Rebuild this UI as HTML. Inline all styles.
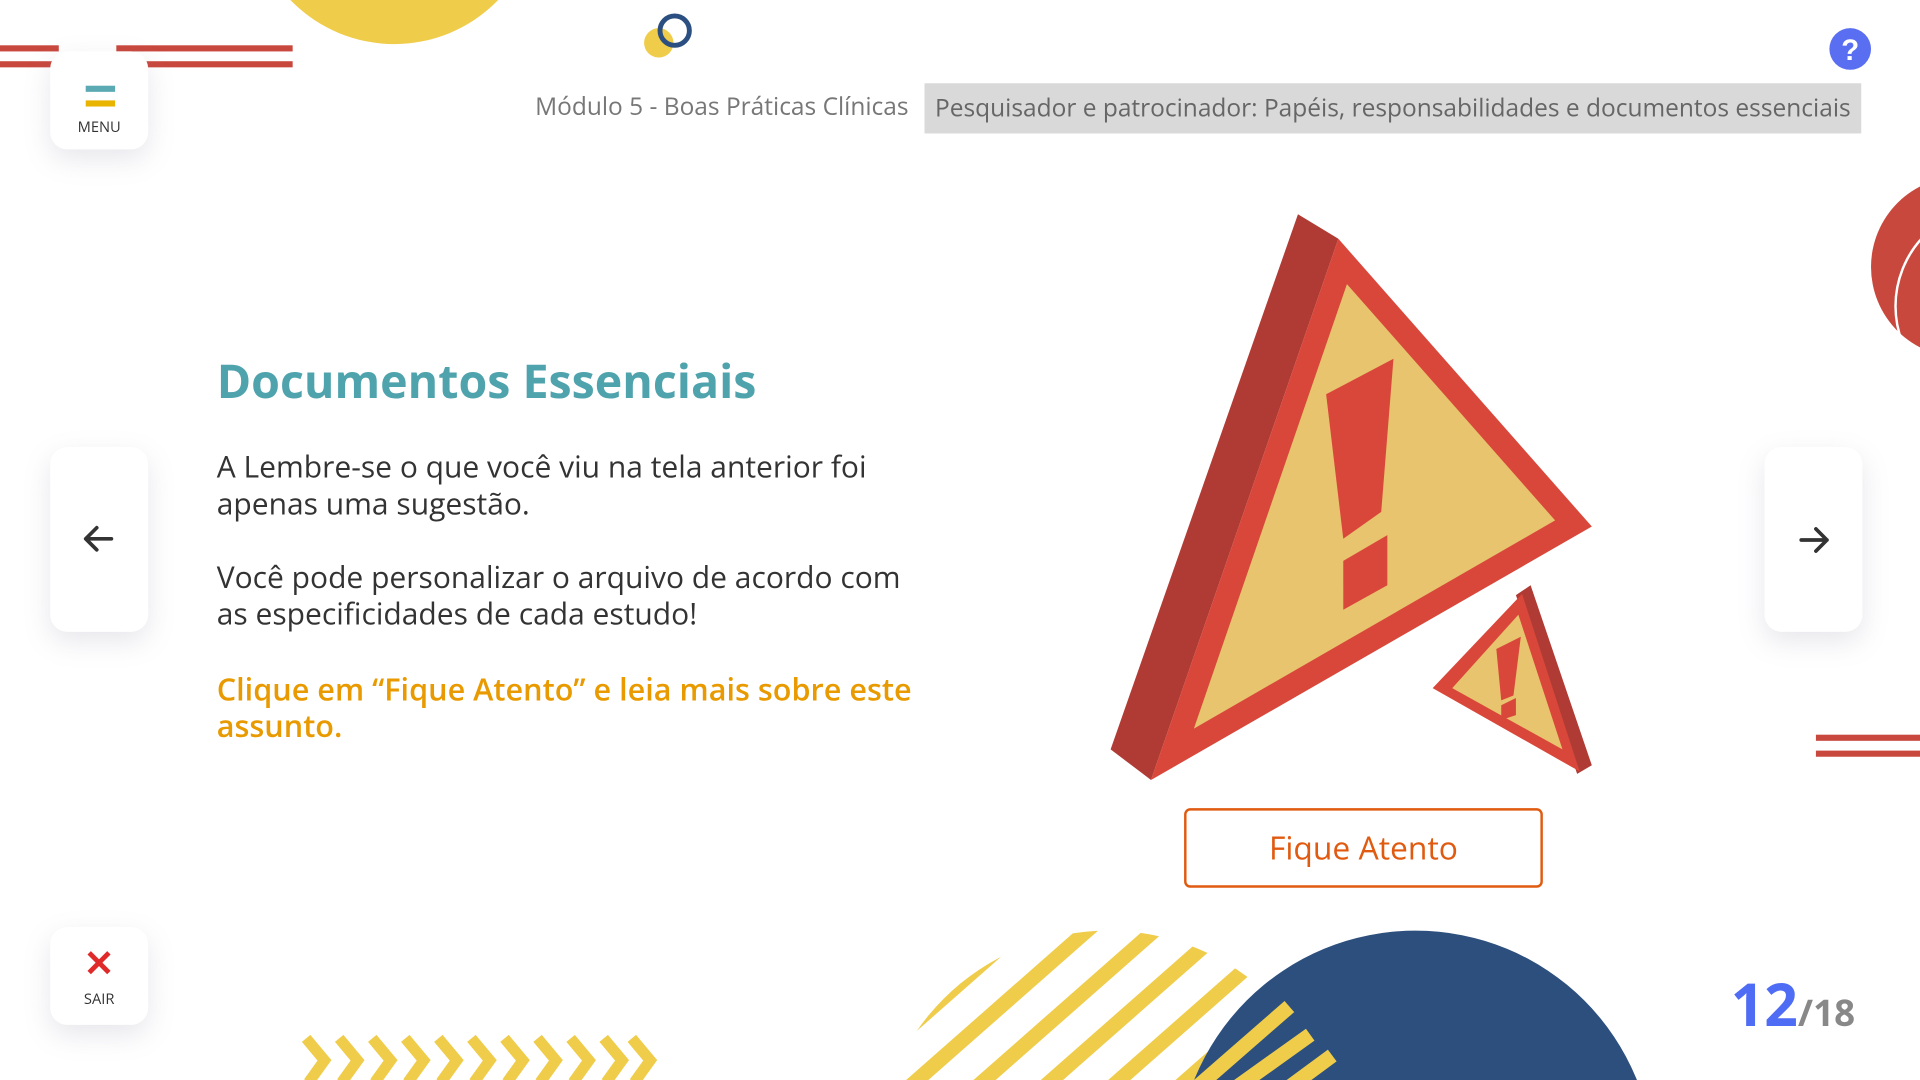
<!DOCTYPE html>
<html><head><meta charset="utf-8"><style>
html,body{margin:0;padding:0;width:1920px;height:1080px;overflow:hidden;background:#fff;}
#w{position:absolute;left:0;top:0;width:1568px;height:882px;transform:scale(1.22449);transform-origin:0 0;font-family:"Open Sans","Liberation Sans",sans-serif;overflow:hidden;}
.card{position:absolute;background:#fff;border-radius:14px;box-shadow:0 8px 22px rgba(120,120,150,0.18);}
.abs{position:absolute;}
</style></head><body><div id="w">
<svg class="abs" style="left:0;top:0" width="1568" height="882">
<circle cx="322" cy="-82" r="118" fill="#efcc4a"/>
<rect x="0" y="37" width="48" height="5" fill="#c9483d"/>
<rect x="95" y="37" width="144" height="5" fill="#c9483d"/>
<rect x="0" y="50" width="239" height="5" fill="#c9483d"/>
<circle cx="538" cy="35" r="12" fill="#efcc4a"/>
<circle cx="551" cy="25" r="12" fill="none" stroke="#2b4f80" stroke-width="4"/>
<circle cx="1511" cy="40" r="17" fill="#5a6ef2"/>
<text x="1511" y="49" font-size="24" font-weight="bold" fill="#fff" text-anchor="middle" font-family="Liberation Sans">?</text>
<circle cx="1602" cy="218" r="74" fill="#c9483d"/>
<circle cx="1630" cy="250" r="82" fill="none" stroke="#fff" stroke-width="2"/>
<rect x="1483" y="600" width="85" height="5" fill="#c9483d"/>
<rect x="1483" y="613" width="85" height="5" fill="#c9483d"/>
<polygon points="1060,175 1093,195 940,637 907,612" fill="#b03b34"/>
<polygon points="1093,195 1300,430 940,637" fill="#d9473b"/>
<polygon points="1100,232 1270,425 975,595" fill="#e8c46e"/>
<polygon points="1083,322 1138,293 1128,418 1097,440" fill="#d9473b"/>
<polygon points="1097,458 1133,437 1133,478 1097,498" fill="#d9473b"/>
<polygon points="1250,478 1300,625 1288,632 1238,486" fill="#b03b34"/>
<polygon points="1243,485 1290,630 1170,562" fill="#d9473b"/>
<polygon points="1240,502 1276,612 1186,562" fill="#e8c46e"/>
<polygon points="1222,530 1242,520 1236,568 1226,572" fill="#d9473b"/>
<polygon points="1226,576 1238,570 1238,584 1226,588" fill="#d9473b"/>
<defs><clipPath id="c1"><circle cx="905" cy="950" r="190"/></clipPath></defs>
<g clip-path="url(#c1)" stroke="#efcc4a" stroke-width="12">
<line x1="560" y1="1000" x2="860" y2="736"/><line x1="615" y1="1000" x2="915" y2="736"/><line x1="670" y1="1000" x2="970" y2="736"/><line x1="725" y1="1000" x2="1025" y2="736"/><line x1="780" y1="1000" x2="1080" y2="736"/><line x1="835" y1="1000" x2="1135" y2="736"/><line x1="890" y1="1000" x2="1190" y2="736"/>
</g>
<circle cx="1156" cy="955" r="195" fill="#2c4f7e"/>
<g stroke="#efcc4a" stroke-width="12"><line x1="975" y1="890" x2="1053" y2="822"/><line x1="1000" y1="895" x2="1070" y2="845"/><line x1="1050" y1="890" x2="1088" y2="862"/></g>
<g fill="none" stroke="#efcc4a" stroke-width="9">
<polyline points="250,848 265,866 252,884"/><polyline points="277,848 292,866 279,884"/><polyline points="304,848 319,866 306,884"/><polyline points="331,848 346,866 333,884"/><polyline points="358,848 373,866 360,884"/><polyline points="385,848 400,866 387,884"/><polyline points="412,848 427,866 414,884"/><polyline points="439,848 454,866 441,884"/><polyline points="466,848 481,866 468,884"/><polyline points="493,848 508,866 495,884"/><polyline points="516,848 531,866 518,884"/>
</g>
</svg>
<div class="card" style="left:41px;top:42px;width:80px;height:80px;">
<div class="abs" style="left:29px;top:28px;width:24px;height:5px;background:#5aa9b3"></div>
<div class="abs" style="left:29px;top:40px;width:24px;height:5px;background:#e8b400"></div>
<div class="abs" style="left:0;top:53px;width:80px;text-align:center;font-size:12px;color:#333">MENU</div>
</div>
<div class="abs" style="right:826px;top:73px;font-size:20px;color:#777;white-space:nowrap">Módulo 5 - Boas Práticas Clínicas</div>
<div class="abs" style="left:755px;top:68px;width:765px;height:41px;background:#d9d9d9;color:#666;font-size:20px;line-height:40px;text-align:center;white-space:nowrap">Pesquisador e patrocinador: Papéis, responsabilidades e documentos essenciais</div>
<div class="card" style="left:41px;top:365px;width:80px;height:151px;"><svg class="abs" style="left:24px;top:62px" width="30" height="26"><path d="M26 13H5M14 4L5 13L14 22" fill="none" stroke="#333" stroke-width="3" stroke-linecap="round" stroke-linejoin="round"/></svg></div>
<div class="card" style="left:1441px;top:365px;width:80px;height:151px;"><svg class="abs" style="left:27px;top:63px" width="30" height="26"><path d="M3 13H24M15 4L24 13L15 22" fill="none" stroke="#333" stroke-width="3" stroke-linecap="round" stroke-linejoin="round"/></svg></div>
<div class="card" style="left:41px;top:757px;width:80px;height:80px;">
<div class="abs" style="left:0;top:12px;width:80px;text-align:center;font-size:30px;color:#e02a2a;font-weight:bold;line-height:34px">&#10005;</div>
<div class="abs" style="left:0;top:50px;width:80px;text-align:center;font-size:12px;color:#333">SAIR</div>
</div>
<div class="abs" style="left:177px;top:285px;font-size:38px;font-weight:bold;color:#4fa3ad;white-space:nowrap">Documentos Essenciais</div>
<div class="abs" style="left:177px;top:367px;width:570px;font-size:24.5px;line-height:30px;color:#333">A Lembre-se o que você viu na tela anterior foi apenas uma sugestão.<br><br>Você pode personalizar o arquivo de acordo com as especificidades de cada estudo!</div>
<div class="abs" style="left:177px;top:548px;width:600px;font-size:25px;line-height:30px;color:#e89a00;font-weight:600">Clique em “Fique Atento” e leia mais sobre este<br>assunto.</div>
<div class="abs" style="left:967px;top:660px;width:289px;height:61px;border:2px solid #e05a10;border-radius:5px;text-align:center;line-height:61px;font-size:26px;color:#e05a10">Fique Atento</div>
<div class="abs" style="right:53px;top:788px;white-space:nowrap;font-weight:bold"><span style="font-size:48px;color:#4f6cf5">12</span><span style="font-size:30px;color:#888">/18</span></div>
</div></body></html>
